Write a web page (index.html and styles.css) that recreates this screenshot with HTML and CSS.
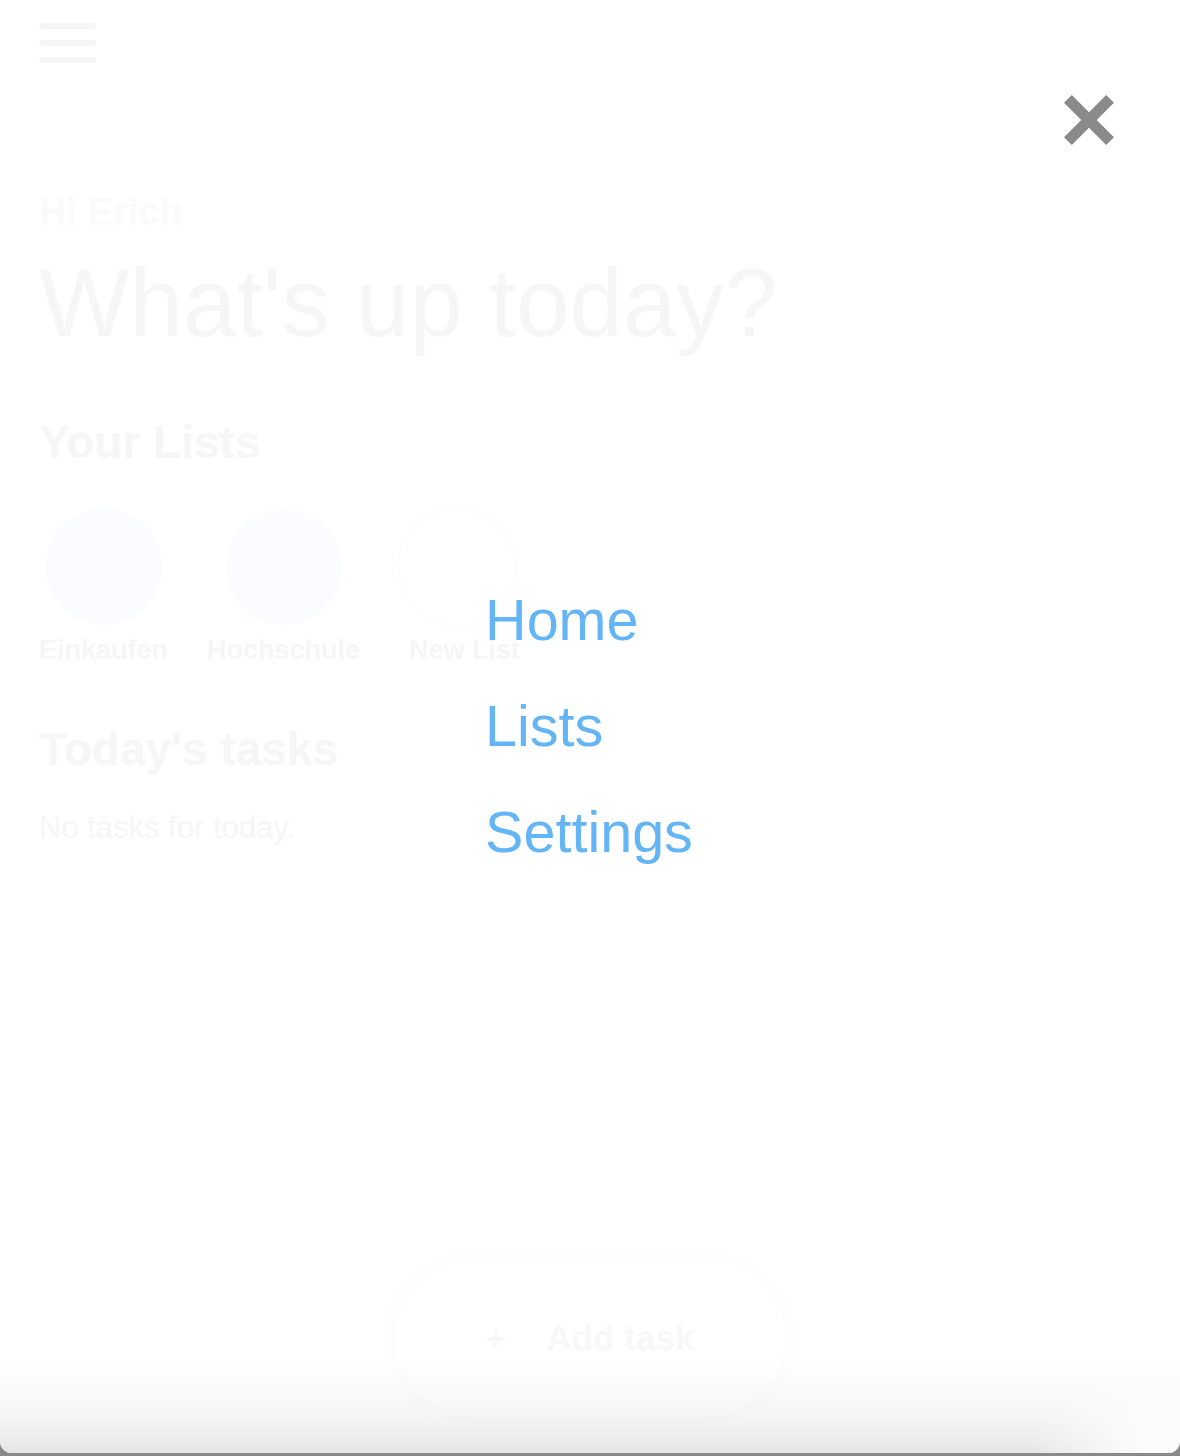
FILE: index.html
```html
<!DOCTYPE html>
<html lang="en">
<head>
<meta charset="utf-8">
<title>Todo</title>
<link rel="stylesheet" href="styles.css">
</head>
<body>
<div class="window">
  <main class="page">
    <div class="burger"><span></span><span></span><span></span></div>
    <p class="greeting">Hi Erich</p>
    <h1 class="title">What's up today?</h1>
    <h2 class="section-title">Your Lists</h2>
    <div class="lists">
      <div class="list-item"><div class="circle circle-blue"></div><span class="list-label">Einkaufen</span></div>
      <div class="list-item"><div class="circle circle-blue"></div><span class="list-label">Hochschule</span></div>
      <div class="list-item list-item-new"><div class="circle circle-new"></div><span class="list-label label-new">New List</span></div>
    </div>
    <h2 class="section-title tasks-title">Today's tasks</h2>
    <p class="empty">No tasks for today.</p>
  </main>

  <button class="add-task"><span class="plus">+</span><span>Add task</span></button>

  <div class="bottom-fade"></div>

  <div class="menu-overlay">
    <button class="close" aria-label="Close">
      <svg width="50" height="50" viewBox="0 0 50 50"><path d="M3.9 3.9 L46.1 46.1 M46.1 3.9 L3.9 46.1" stroke="#8a8a8a" stroke-width="11" fill="none"/></svg>
    </button>
    <nav class="menu">
      <a href="#">Home</a>
      <a href="#">Lists</a>
      <a href="#">Settings</a>
    </nav>
  </div>
</div>
</body>
</html>
```

FILE: styles.css
```css
* { box-sizing: border-box; }
html, body { margin: 0; padding: 0; }
body {
  background: #8a8a8a;
  font-family: "Liberation Sans", Arial, sans-serif;
  height: 1456px;
  overflow: hidden;
}
.window {
  position: relative;
  height: 1453px;
  background: #fff;
  border-radius: 0 0 12px 12px;
  overflow: hidden;
}
.page {
  padding: 23px 39px 0;
}
.burger {
  display: flex;
  flex-direction: column;
  gap: 11px;
  width: 57px;
}
.burger span {
  display: block;
  height: 6px;
  border-radius: 3px;
  background: #f1f1f1;
}
.greeting {
  margin: 130px 0 0;
  font-size: 38px;
  line-height: 1;
  font-weight: bold;
  color: #f8f8f8;
}
.title {
  margin: 24px 0 0;
  font-size: 96px;
  line-height: 1;
  font-weight: normal;
  color: #f2f2f2;
}
.section-title {
  margin: 68px 0 0;
  font-size: 46px;
  line-height: 1;
  font-weight: bold;
  color: #f2f2f2;
}
.lists {
  margin-top: 44px;
  display: flex;
  gap: 39px;
  align-items: flex-start;
}
.list-item {
  display: flex;
  flex-direction: column;
  align-items: center;
  gap: 12px;
}
.list-item-new { align-items: flex-start; }
.circle {
  width: 116px;
  height: 116px;
  border-radius: 50%;
}
.circle-blue { background: #f8fbff; }
.circle-new {
  background: #fff;
  box-shadow: 0 0 3px 1px rgba(0,0,0,0.025);
}
.list-label {
  font-size: 27px;
  line-height: 1;
  font-weight: bold;
  color: #f3f3f3;
}
.label-new { margin-left: 10px; }
.tasks-title { margin-top: 62px; }
.empty {
  margin: 40px 0 0;
  font-size: 31px;
  line-height: 1;
  color: #f3f3f3;
}
.add-task {
  position: absolute;
  left: 50%;
  bottom: 36px;
  transform: translateX(-50%);
  width: 390px;
  height: 158px;
  border: none;
  border-radius: 79px;
  background: #fff;
  box-shadow: 0 4px 22px rgba(0,0,0,0.03);
  display: flex;
  align-items: center;
  justify-content: center;
  gap: 41px;
  font-family: "Liberation Sans", Arial, sans-serif;
  font-size: 35px;
  font-weight: bold;
  color: #f5f5f5;
  padding: 0;
}
.plus { font-size: 34px; }
.bottom-fade {
  position: absolute;
  left: 0;
  right: 0;
  bottom: 0;
  height: 90px;
  pointer-events: none;
  background:
    radial-gradient(ellipse 130px 80px at 1160px 100%, rgba(255,255,255,1) 0%, rgba(255,255,255,0.6) 45%, rgba(255,255,255,0) 100%),
    linear-gradient(to bottom, rgba(222,222,222,0) 0%, rgba(230,230,230,0.55) 60%, rgba(220,220,220,1) 100%);
}
.menu-overlay {
  position: absolute;
  inset: 0;
  background: rgba(255,255,255,0.3);
  display: flex;
  align-items: center;
  justify-content: center;
}
.close {
  position: absolute;
  top: 95px;
  right: 66px;
  width: 50px;
  height: 50px;
  padding: 0;
  border: none;
  background: none;
}
.close svg { display: block; }
.menu {
  display: flex;
  flex-direction: column;
  gap: 49px;
  margin-left: -2px;
}
.menu a {
  font-size: 57.5px;
  line-height: 57px;
  color: #64b5f6;
  text-decoration: none;
}
```
